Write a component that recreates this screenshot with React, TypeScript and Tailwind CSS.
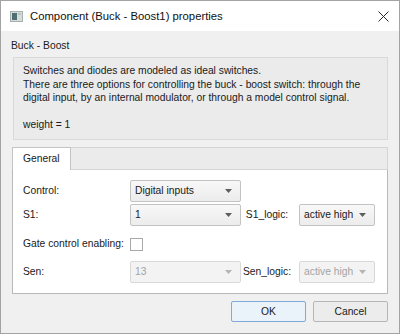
import React from "react";

const ui = { fontFamily: '"Liberation Sans", Arial, sans-serif' };

function Arrow({ disabled }: { disabled?: boolean }) {
  return (
    <svg width="7" height="4" viewBox="0 0 7 4" className="shrink-0">
      <path d="M0 0 H7 L3.5 4 Z" fill={disabled ? "#b4b4b4" : "#5e5e5e"} />
    </svg>
  );
}

function Combo({ value, width, disabled }: { value: string; width: string; disabled?: boolean }) {
  return (
    <div
      className={`flex h-[22px] items-center justify-between whitespace-nowrap rounded-[2px] border pl-[4px] pr-[8px] ${width} ${
        disabled
          ? "border-[#d9d9d9] bg-[#f3f3f3] text-[#a3a3a3]"
          : "border-[#c3c3c3] bg-gradient-to-b from-[#f8f8f8] to-[#ececec] text-[#1a1a1a]"
      }`}
    >
      <span>{value}</span>
      <Arrow disabled={disabled} />
    </div>
  );
}

export default function App() {
  return (
    <div className="flex h-[334px] w-[400px] flex-col border border-[#a3a3a3] bg-[#f0f0f0] text-[10.3px]" style={ui}>
      <div className="flex h-[30px] shrink-0 items-center bg-white pl-[9px] pr-[9px]">
        <svg width="13" height="11" viewBox="0 0 13 11" className="shrink-0">
          <rect x="0.5" y="0.5" width="12" height="10" fill="#d5dcdc" stroke="#a7b0b0" />
          <rect x="2" y="2" width="5" height="7" fill="#4f6f70" />
          <rect x="8" y="2" width="3" height="2" fill="#b9c3c3" />
        </svg>
        <span className="ml-[7px] text-[11.3px] text-[#111]">Component (Buck - Boost1) properties</span>
        <svg width="11" height="11" viewBox="0 0 11 11" className="ml-auto mr-[1px]">
          <path d="M0.5 0.5 L10.5 10.5 M10.5 0.5 L0.5 10.5" stroke="#2b2b2b" strokeWidth="1" />
        </svg>
      </div>

      <div className="flex flex-1 flex-col pl-[10px] pr-[10px] pt-[8px]">
        <div className="h-[14px] leading-[14px] text-[#1a1a1a]">Buck - Boost</div>

        <div className="ml-[2px] mt-[4px] h-[83px] w-[375px] whitespace-nowrap border border-[#d9d9d9] bg-[#ebebeb] pl-[9px] pt-[6px] leading-[13.5px] text-[#1a1a1a]">
          <div>Switches and diodes are modeled as ideal switches.</div>
          <div>There are three options for controlling the buck - boost switch: through the</div>
          <div>digital input, by an internal modulator, or through a model control signal.</div>
          <div className="h-[13.5px]" />
          <div>weight = 1</div>
        </div>

        <div className="ml-[1px] mt-[7px] flex h-[23px] w-[376px]">
          <div className="flex w-[59px] items-center border-l border-r border-t border-[#c4c4c4] bg-white pl-[10px] text-[#1a1a1a]">
            General
          </div>
          <div className="flex-1 border-b border-r border-t border-[#d4d4d4] bg-[#ebebeb]" />
        </div>

        <div className="ml-[1px] h-[124px] w-[376px] whitespace-nowrap border-b border-l border-r border-[#b8b8b8] bg-white pl-[10px] pt-[10px] text-[#1a1a1a]">
          <div className="flex h-[22px] items-center">
            <div className="w-[107px]">Control:</div>
            <Combo value="Digital inputs" width="w-[111px]" />
          </div>
          <div className="mt-[2px] flex h-[22px] items-center">
            <div className="w-[107px]">S1:</div>
            <Combo value="1" width="w-[111px]" />
            <div className="w-[52px] text-center">S1_logic:</div>
            <div className="ml-[6px]">
              <Combo value="active high" width="w-[76px]" />
            </div>
          </div>
          <div className="mt-[7px] flex h-[22px] items-center">
            <div className="w-[107px]">Gate control enabling:</div>
            <div className="h-[13px] w-[13px] border border-[#a9a9a9] bg-white" />
          </div>
          <div className="mt-[6px] flex h-[22px] items-center">
            <div className="w-[107px]">Sen:</div>
            <Combo value="13" width="w-[111px]" disabled />
            <div className="w-[52px] text-center">Sen_logic:</div>
            <div className="ml-[6px]">
              <Combo value="active high" width="w-[76px]" disabled />
            </div>
          </div>
        </div>

        <div className="mr-[1px] mt-[7px] flex justify-end gap-[7px]">
          <button className="h-[21px] w-[75px] rounded-[2px] border border-[#7ea9d8] bg-[#eaf2fa] text-[#1a1a1a]">OK</button>
          <button className="h-[21px] w-[75px] rounded-[2px] border border-[#b6b6b6] bg-[#ececec] text-[#1a1a1a]">Cancel</button>
        </div>
      </div>
    </div>
  );
}
